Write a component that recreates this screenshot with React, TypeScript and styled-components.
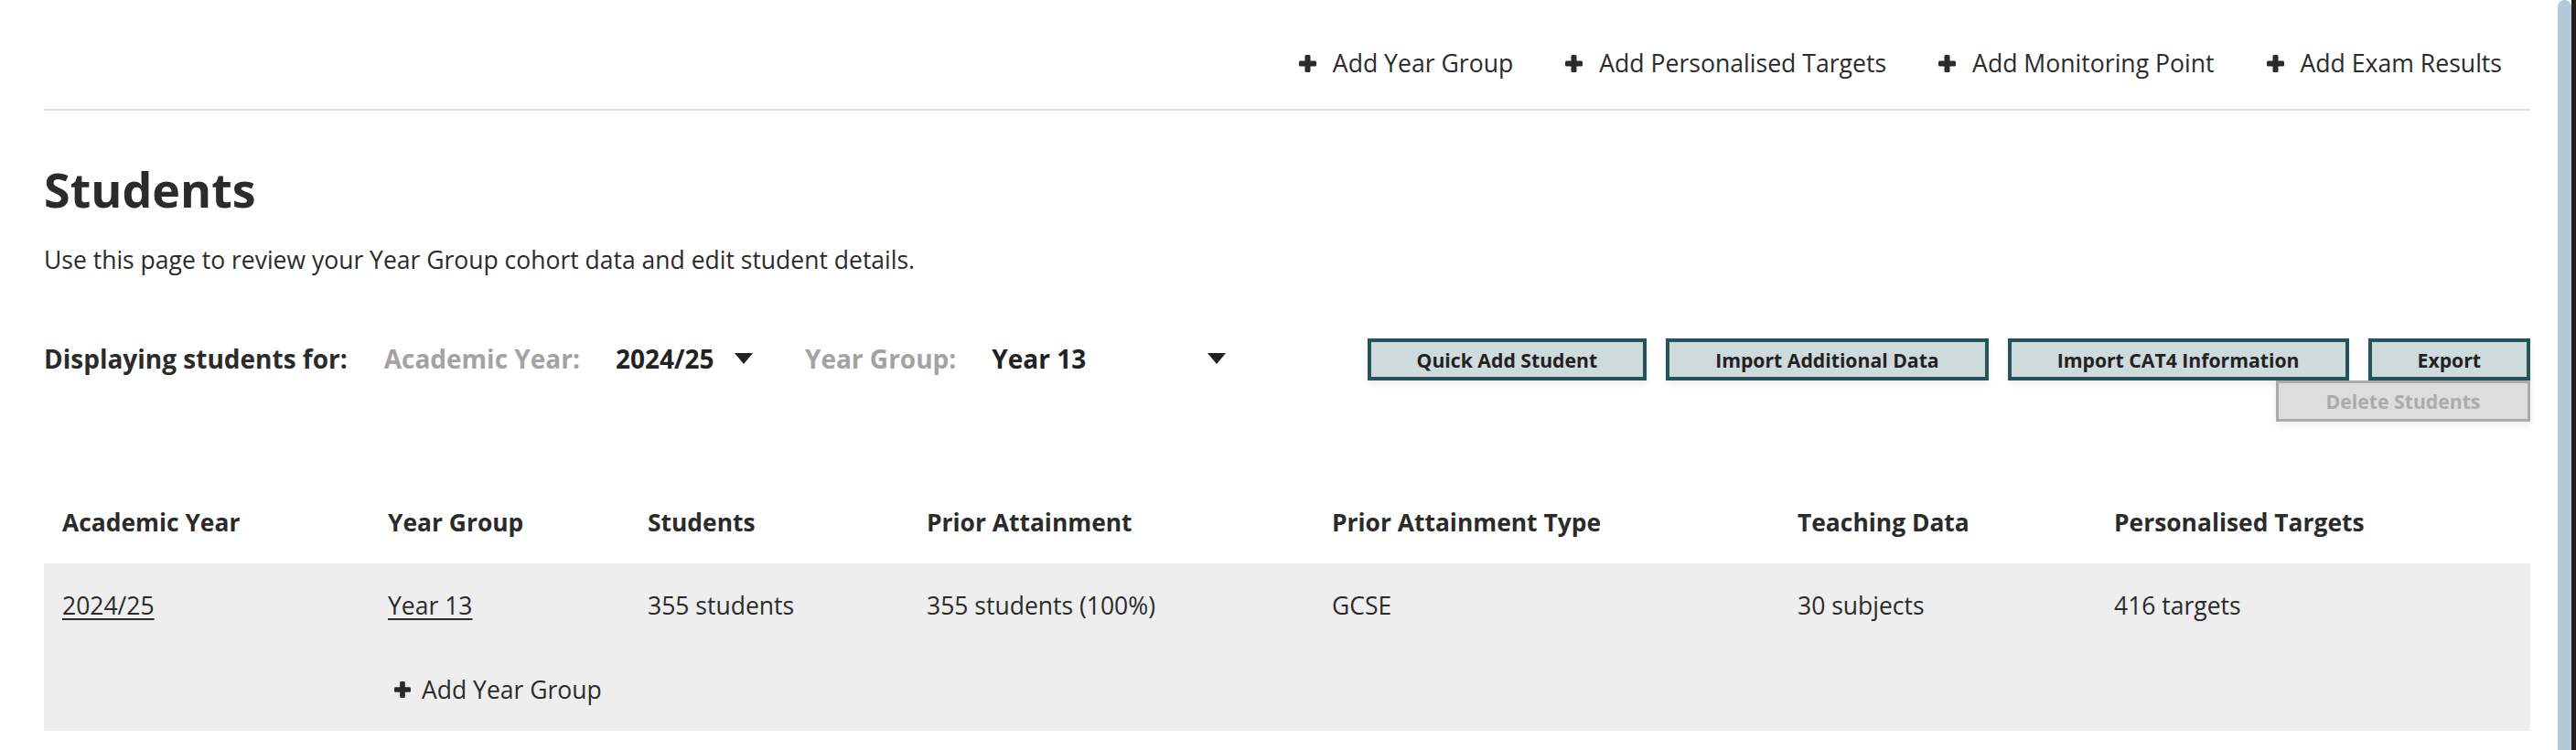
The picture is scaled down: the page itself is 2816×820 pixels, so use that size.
import React from "react";
import styled, { createGlobalStyle } from "styled-components";

const Global = createGlobalStyle`
  html, body { margin: 0; padding: 0; background: #fff; overflow: hidden; }
  body { font-family: "Open Sans", "Noto Sans", sans-serif; color: #2b2b2b; }
  * { box-sizing: border-box; }
`;

const Shell = styled.div`
  display: flex;
  width: 100vw;
  height: 100vh;
  overflow: hidden;
`;

const Page = styled.main`
  flex: 1;
  min-width: 0;
  padding: 0 30px 0 48px;
`;

const ScrollStrip = styled.div`
  display: flex;
  width: 20px;
  height: 100%;
  flex-shrink: 0;
`;

const Thumb = styled.div`
  width: 15px;
  height: 100%;
  background: #b4c8d7;
  border-radius: 8px 8px 0 0;
`;

const Edge = styled.div`
  width: 5px;
  height: 100%;
  background: #1e1e1e;
`;

const TopBar = styled.nav`
  display: flex;
  justify-content: flex-end;
  align-items: center;
  gap: 57px;
  padding: 51px 31px 32px 0;
  border-bottom: 2px solid #dddddd;
`;

const TopLink = styled.a`
  display: flex;
  align-items: center;
  gap: 18px;
  font-size: 26.6px;
  line-height: 36px;
  color: #2b2b2b;
  text-decoration: none;
  cursor: pointer;
`;

const Heading = styled.h1`
  margin: 51px 0 0 0;
  font-size: 52px;
  font-weight: 700;
  line-height: 70px;
  color: #2b2b2b;
`;

const Intro = styled.p`
  margin: 24px 0 0 0;
  font-size: 26.5px;
  line-height: 36px;
`;

const FilterBar = styled.div`
  display: flex;
  justify-content: space-between;
  align-items: flex-start;
  margin-top: 68px;
`;

const Filters = styled.div`
  display: flex;
  align-items: center;
  height: 44px;
  font-size: 28px;
  font-weight: 700;
`;

const FilterTitle = styled.span`
  margin-right: 40px;
`;

const FilterLabel = styled.span`
  color: #a3a3a3;
  margin-right: 39px;
`;

const Select = styled.div<{ $width: number; $gapAfter: number }>`
  display: flex;
  align-items: center;
  justify-content: space-between;
  width: ${(p) => p.$width}px;
  margin-right: ${(p) => p.$gapAfter}px;
  color: #222;
`;

const Actions = styled.div`
  display: flex;
  flex-direction: column;
  align-items: flex-end;
`;

const ActionRow = styled.div`
  display: flex;
  gap: 21px;
`;

const Button = styled.button`
  height: 46px;
  padding: 0 50px;
  border: 4px solid #24545a;
  background: #cfdadd;
  font-family: "Open Sans", sans-serif;
  font-size: 21.2px;
  font-weight: 700;
  color: #222;
  box-shadow: 0 4px 8px rgba(0, 0, 0, 0.07);
  cursor: pointer;
`;

const DisabledButton = styled.button`
  height: 45px;
  width: 278px;
  padding: 0;
  border: 3px solid #ababab;
  background: #dddddd;
  font-family: "Open Sans", sans-serif;
  font-size: 21.2px;
  font-weight: 700;
  color: #ababab;
  box-shadow: 0 4px 8px rgba(0, 0, 0, 0.07);
`;

const Table = styled.table`
  margin-top: 64px;
  width: 100%;
  border-collapse: collapse;
  table-layout: fixed;
  font-size: 26.5px;
`;

const Th = styled.th`
  text-align: left;
  font-weight: 700;
  font-size: 26.4px;
  padding: 28px 20px 27px 20px;
  line-height: 36px;
`;

const BodyRow = styled.tr`
  background: #eeeeee;
`;

const Td = styled.td`
  padding: 27.5px 20px;
  line-height: 36px;
  vertical-align: top;
`;

const CellLink = styled.a`
  color: #2b2b2b;
  text-decoration: underline;
  text-underline-offset: 4px;
  text-decoration-thickness: 2px;
`;

const AddInline = styled.a`
  display: inline-flex;
  align-items: center;
  gap: 12px;
  padding-left: 7px;
  color: #2b2b2b;
  text-decoration: none;
`;

const Plus = ({ size = 19 }: { size?: number }) => (
  <svg width={size} height={size} viewBox="0 0 19 19" aria-hidden>
    <rect x="6.5" y="0" width="6" height="19" rx="1.5" fill="#2b2b2b" />
    <rect x="0" y="6.5" width="19" height="6" rx="1.5" fill="#2b2b2b" />
  </svg>
);

const Caret = () => (
  <svg width="20" height="12" viewBox="0 0 20 12" aria-hidden>
    <path d="M0 0 L20 0 L10 12 Z" fill="#222" />
  </svg>
);

const cols = [356, 284, 305, 443, 509, 346, 475];

export default function App() {
  return (
    <>
      <Global />
      <Shell>
        <Page>
          <TopBar>
            {["Add Year Group", "Add Personalised Targets", "Add Monitoring Point", "Add Exam Results"].map((t) => (
              <TopLink key={t}>
                <Plus />
                {t}
              </TopLink>
            ))}
          </TopBar>

          <Heading>Students</Heading>
          <Intro>Use this page to review your Year Group cohort data and edit student details.</Intro>

          <FilterBar>
            <Filters>
              <FilterTitle>Displaying students for:</FilterTitle>
              <FilterLabel>Academic Year:</FilterLabel>
              <Select $width={150} $gapAfter={57}>
                2024/25
                <Caret />
              </Select>
              <FilterLabel>Year Group:</FilterLabel>
              <Select $width={256} $gapAfter={0}>
                Year 13
                <Caret />
              </Select>
            </Filters>
            <Actions>
              <ActionRow>
                <Button>Quick Add Student</Button>
                <Button>Import Additional Data</Button>
                <Button>Import CAT4 Information</Button>
                <Button>Export</Button>
              </ActionRow>
              <DisabledButton disabled>Delete Students</DisabledButton>
            </Actions>
          </FilterBar>

          <Table>
            <colgroup>
              {cols.map((w, i) => (
                <col key={i} style={{ width: w }} />
              ))}
            </colgroup>
            <thead>
              <tr>
                <Th>Academic Year</Th>
                <Th>Year Group</Th>
                <Th>Students</Th>
                <Th>Prior Attainment</Th>
                <Th>Prior Attainment Type</Th>
                <Th>Teaching Data</Th>
                <Th>Personalised Targets</Th>
              </tr>
            </thead>
            <tbody>
              <BodyRow>
                <Td>
                  <CellLink>2024/25</CellLink>
                </Td>
                <Td>
                  <CellLink>Year 13</CellLink>
                </Td>
                <Td>355 students</Td>
                <Td>355 students (100%)</Td>
                <Td>GCSE</Td>
                <Td>30 subjects</Td>
                <Td>416 targets</Td>
              </BodyRow>
              <BodyRow>
                <Td />
                <Td>
                  <AddInline>
                    <Plus size={18} />
                    Add Year Group
                  </AddInline>
                </Td>
                <Td />
                <Td />
                <Td />
                <Td />
                <Td />
              </BodyRow>
            </tbody>
          </Table>
        </Page>
        <ScrollStrip>
          <Thumb />
          <Edge />
        </ScrollStrip>
      </Shell>
    </>
  );
}
